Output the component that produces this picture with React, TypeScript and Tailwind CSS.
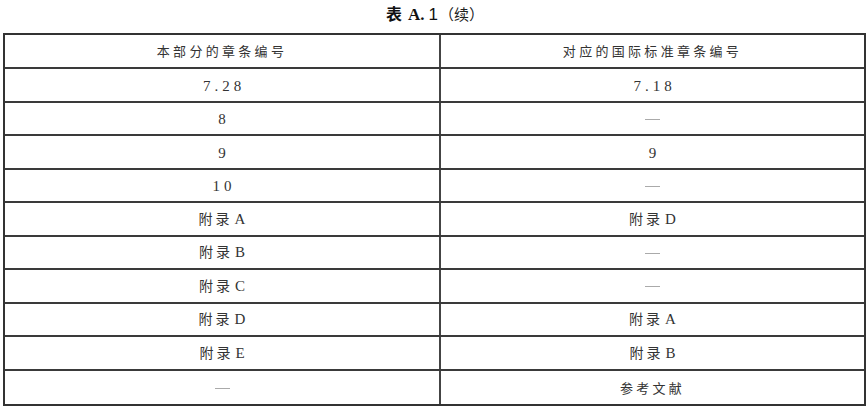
import React from "react";

const rows: [string, string][] = [
  ["7.28", "7.18"],
  ["8", "—"],
  ["9", "9"],
  ["10", "—"],
  ["附录 A", "附录 D"],
  ["附录 B", "—"],
  ["附录 C", "—"],
  ["附录 D", "附录 A"],
  ["附录 E", "附录 B"],
  ["—", "参考文献"],
];

function Cell({ text }: { text: string }) {
  if (text === "—") {
    return <span className="inline-block w-[15px] h-px bg-[#aaa] mt-[2px]" />;
  }
  if (/^[0-9.]+$/.test(text)) {
    return (
      <span
        className="text-[15px] tracking-[4px] pl-[4px] text-[#333] mt-[2px]"
        style={{ fontFamily: '"Liberation Serif", serif' }}
      >
        {text}
      </span>
    );
  }
  if (text.startsWith("附录")) {
    const letter = text.slice(3);
    return (
      <span className="text-[14px] text-[#333]">
        <span className="tracking-[3px]" style={{ fontFamily: '"Noto Sans CJK SC", sans-serif' }}>附录</span>
        <span className="ml-[2px] text-[15px]" style={{ fontFamily: '"Liberation Serif", serif' }}>{letter}</span>
      </span>
    );
  }
  return (
    <span className="text-[13px] tracking-[3.3px] text-[#333]" style={{ fontFamily: '"Noto Sans CJK SC", sans-serif' }}>
      {text}
    </span>
  );
}

export default function App() {
  return (
    <div className="w-[868px] h-[410px] bg-white overflow-hidden">
      <div className="h-[33px] flex items-center justify-center pl-[2px] pb-[4px]">
        <span className="text-[16px] text-[#111] flex items-baseline">
          <span className="font-bold" style={{ fontFamily: '"Noto Sans CJK SC", sans-serif' }}>表</span>
          <span className="font-bold ml-[6px] text-[17px]" style={{ fontFamily: '"Liberation Serif", serif' }}>A.</span>
          <span className="ml-[4px] text-[17px]" style={{ fontFamily: '"Liberation Sans", sans-serif' }}>1</span>
          <span className="ml-[1px] text-[15px] text-[#222]" style={{ fontFamily: '"Noto Sans CJK SC", sans-serif' }}>（续）</span>
        </span>
      </div>
      <div className="ml-[3px] w-[863px] border-2 border-[#333] flex flex-col">
        <div className="grid grid-cols-[436px_1fr] h-[34px] border-b-2 border-[#3a3a3a]">
          <div className="flex items-center justify-center border-r-2 border-[#444]">
            <Cell text="本部分的章条编号" />
          </div>
          <div className="flex items-center justify-center">
            <Cell text="对应的国际标准章条编号" />
          </div>
        </div>
        {rows.map(([a, b], i) => (
          <div
            key={i}
            className={
              "grid grid-cols-[436px_1fr] h-[33.5px] " +
              (i < rows.length - 1 ? "border-b-2 border-[#3a3a3a]" : "")
            }
          >
            <div className="flex items-center justify-center border-r-2 border-[#444]">
              <Cell text={a} />
            </div>
            <div className="flex items-center justify-center">
              <Cell text={b} />
            </div>
          </div>
        ))}
      </div>
    </div>
  );
}
